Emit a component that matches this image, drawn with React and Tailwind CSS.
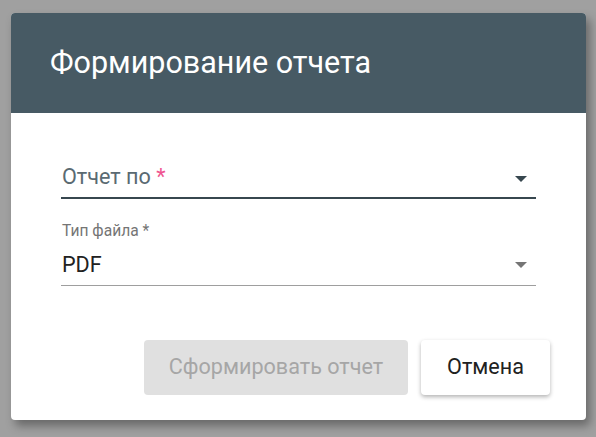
import React from "react";

const Arrow = ({ color }) => (
  <svg width="12" height="6" viewBox="0 0 12 6" className="shrink-0">
    <path d="M0 0h12L6 6z" fill={color} />
  </svg>
);

const App = () => {
  return (
    <div
      className="w-[596px] h-[437px] bg-[#a0a0a0] pt-[13px] pl-[11px]"
      style={{ fontFamily: "Roboto, 'Liberation Sans', sans-serif" }}
    >
      <div className="w-[575px] h-[407px] bg-white rounded-[4px] shadow-[4px_6px_10px_rgba(0,0,0,0.35)] flex flex-col">
        <header className="h-[100px] bg-[#475a64] rounded-t-[4px] flex items-center pl-[39px]">
          <h1 className="text-white text-[30.5px] leading-none">Формирование отчета</h1>
        </header>

        <div className="px-[50px]">
          <div className="mt-[49px] h-[37px] flex items-end pb-[7px] border-b-2 border-[#37474f] pl-[1px] pr-[9px]">
            <span className="flex-1 text-[21.6px] leading-[26px] text-[#5a6a72]">
              Отчет по <span className="text-[#ef5590]">*</span>
            </span>
            <span className="mb-[8px]">
              <Arrow color="#37474f" />
            </span>
          </div>

          <div className="mt-[23px] pl-[1px] text-[15.6px] leading-[18px] text-[#757575]">Тип файла *</div>
          <div className="mt-[12px] flex items-center pb-[7px] border-b border-[#9e9e9e] pl-[1px] pr-[9px]">
            <span className="flex-1 text-[21.6px] leading-[26px] text-[#212121]">PDF</span>
            <Arrow color="#757575" />
          </div>
        </div>

        <div className="mt-[54px] flex justify-end gap-[13px] pr-[36px]">
          <button className="w-[264px] h-[55px] rounded-[4px] bg-[#e0e0e0] text-[#a6a6a6] text-[21.6px]">
            Сформировать отчет
          </button>
          <button className="w-[129px] h-[55px] rounded-[4px] bg-white text-[#212121] text-[21.6px] shadow-[0_2px_4px_rgba(0,0,0,0.3)]">
            Отмена
          </button>
        </div>
      </div>
    </div>
  );
};

export default App;
